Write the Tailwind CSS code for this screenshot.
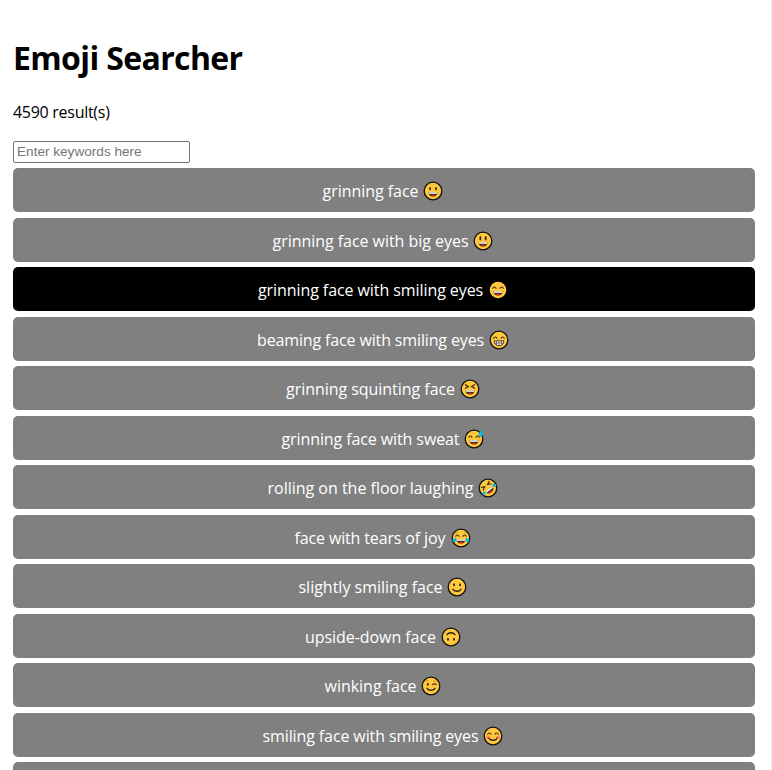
<!DOCTYPE html>
<html lang="en">
<head>
<meta charset="utf-8">
<title>Emoji Searcher</title>
<script src="https://cdn.jsdelivr.net/npm/@tailwindcss/browser@4"></script>
</head>
<body class="h-[770px] overflow-hidden border-r border-[#ececec] bg-white font-['Open_Sans','Noto_Sans',sans-serif] text-base text-black">
<svg class="hidden">
  <defs>
    <g id="disc"><circle cx="10" cy="10" r="8.800" fill="#ffc83d" stroke="#111" stroke-width="1.300"/></g>
    <g id="grin"><path d="M5.500 11.300h9c0 2.700-1.800 4.300-4.500 4.300s-4.500-1.600-4.500-4.300z" fill="#4a2d18"/><path d="M5.900 11.300h8.200v1.500h-8.200z" fill="#fff"/><path d="M7.800 15c.9-1.300 3.500-1.300 4.400 0-1.200.8-3.200.8-4.400 0z" fill="#f03a17"/></g>
    <g id="happy" fill="none" stroke="#3b2a1a" stroke-width="1.100" stroke-linecap="round"><path d="M4.700 8.300c.5-1.700 2.800-1.700 3.300 0M12 8.300c.5-1.700 2.800-1.700 3.300 0"/></g>
    <path id="smile" d="M6 12.300c1.600 2.600 6.400 2.600 8 0" fill="none" stroke="#2b2118" stroke-width="1.300" stroke-linecap="round"/>
  </defs>
</svg>
<main class="pt-9 pl-[13px] pr-4">
  <h1 class="h-11 text-[32px] leading-[44px] font-bold tracking-[-0.63px] whitespace-nowrap">Emoji Searcher</h1>
  <p class="mt-5 h-6 leading-6 tracking-[-0.28px]">4590 result(s)</p>
  <input class="mt-[17px] block h-[22px] w-[177px] rounded-[2px] border border-[#767676] bg-white px-[3px] pb-0.5 font-['Liberation_Sans',Arial,sans-serif] text-[13.6px] leading-4 placeholder:text-[#757575]" type="text" placeholder="Enter keywords here">
  <ul class="mt-[5px] flex flex-col gap-[5.5px] text-white">
    <li class="flex h-11 shrink-0 items-center justify-center gap-[3.5px] rounded-[5px] bg-[#808080] pt-0.5 pr-[2.5px]"><span class="w-[97px] whitespace-nowrap tracking-[-0.04px]">grinning face</span>
      <svg class="size-5" viewBox="0 0 20 20"><use href="#disc"/><ellipse cx="7" cy="7.700" rx=".9" ry="1.600" fill="#2b2118"/><ellipse cx="13" cy="7.700" rx=".9" ry="1.600" fill="#2b2118"/><use href="#grin"/></svg></li>
    <li class="flex h-11 shrink-0 items-center justify-center gap-[3.5px] rounded-[5px] bg-[#808080] pt-0.5 pr-[2.5px]"><span class="w-[197px] whitespace-nowrap tracking-[-0.04px]">grinning face with big eyes</span>
      <svg class="size-5" viewBox="0 0 20 20"><use href="#disc"/><ellipse cx="7.300" cy="7.200" rx=".9" ry="2.300" fill="#2b2118"/><ellipse cx="12.700" cy="7.200" rx=".9" ry="2.300" fill="#2b2118"/><use href="#grin"/></svg></li>
    <li class="flex h-11 shrink-0 items-center justify-center gap-[3.5px] rounded-[5px] bg-black pt-0.5 pr-[2.5px]"><span class="w-[226px] whitespace-nowrap tracking-[-0.08px]">grinning face with smiling eyes</span>
      <svg class="size-5" viewBox="0 0 20 20"><circle cx="10" cy="10" r="8.300" fill="#ffc83d"/><use href="#happy"/><use href="#grin"/></svg></li>
    <li class="flex h-11 shrink-0 items-center justify-center gap-[3.5px] rounded-[5px] bg-[#808080] pt-0.5 pr-[2.5px]"><span class="w-[228px] whitespace-nowrap tracking-[-0.14px]">beaming face with smiling eyes</span>
      <svg class="size-5" viewBox="0 0 20 20"><use href="#disc"/><use href="#happy"/><path d="M5.200 10.800h9.600c0 3-2 5-4.800 5s-4.800-2-4.800-5z" fill="#fff" stroke="#3b2a1a" stroke-width=".9"/><path d="M5.500 13h9M7.500 11v4.200M10 11v4.700M12.500 11v4.200" stroke="#3b2a1a" stroke-width=".6"/></svg></li>
    <li class="flex h-11 shrink-0 items-center justify-center gap-[3.5px] rounded-[5px] bg-[#808080] pt-0.5 pr-[2.5px]"><span class="w-[170px] whitespace-nowrap tracking-[-0.04px]">grinning squinting face</span>
      <svg class="size-5" viewBox="0 0 20 20"><use href="#disc"/><path d="M4.900 5.600l3.500 1.900-3.500 1.900M15.100 5.600l-3.500 1.900 3.500 1.900" fill="none" stroke="#2b2118" stroke-width="1.100"/><use href="#grin"/></svg></li>
    <li class="flex h-11 shrink-0 items-center justify-center gap-[3.5px] rounded-[5px] bg-[#808080] pt-0.5 pr-[2.5px]"><span class="w-[179px] whitespace-nowrap tracking-[-0.1px]">grinning face with sweat</span>
      <svg class="size-5" viewBox="0 0 20 20"><use href="#disc"/><use href="#happy"/><use href="#grin"/><path d="M16.700 1.200c1.300 2 1.900 3.200 1.900 4.400 0 2.800-3.900 2.800-3.900 0 0-1.200.8-2.400 2-4.400z" fill="#00bcf2"/></svg></li>
    <li class="flex h-11 shrink-0 items-center justify-center gap-[3.5px] rounded-[5px] bg-[#808080] pt-0.5 pr-[2.5px]"><span class="w-[207px] whitespace-nowrap tracking-[-0.01px]">rolling on the floor laughing</span>
      <svg class="size-5" viewBox="0 0 20 20"><use href="#disc"/><g transform="rotate(-38 10 10)"><path d="M4.700 5.300l3.500 1.700-3.500 1.700M15.300 5.300l-3.500 1.700 3.500 1.700" fill="none" stroke="#2b2118" stroke-width="1.100"/><use href="#grin"/><path d="M4.700 9.800c-2 .2-3.100 1.200-2.900 2.600.3 1.600 2.800 1.400 3-.3zM15.300 9.800c2 .2 3.100 1.200 2.900 2.600-.3 1.600-2.800 1.400-3-.3z" fill="#00bcf2"/></g></svg></li>
    <li class="flex h-11 shrink-0 items-center justify-center gap-[3.5px] rounded-[5px] bg-[#808080] pt-0.5 pr-[2.5px]"><span class="w-[153px] whitespace-nowrap tracking-[-0.14px]">face with tears of joy</span>
      <svg class="size-5" viewBox="0 0 20 20"><use href="#disc"/><path d="M4.500 5.300l2-1M15.500 5.300l-2-1" stroke="#d67d00" stroke-width=".9"/><use href="#happy"/><use href="#grin"/><path d="M5 10c-2.200 0-3.600 1.200-3.300 2.900.4 1.900 3.200 1.500 3.400-.5zM15 10c2.200 0 3.600 1.200 3.300 2.900-.4 1.900-3.200 1.500-3.400-.5z" fill="#00bcf2"/></svg></li>
    <li class="flex h-11 shrink-0 items-center justify-center gap-[3.5px] rounded-[5px] bg-[#808080] pt-0.5 pr-[2.5px]"><span class="w-[145px] whitespace-nowrap tracking-[-0.01px]">slightly smiling face</span>
      <svg class="size-5" viewBox="0 0 20 20"><use href="#disc"/><ellipse cx="7" cy="7.800" rx=".9" ry="1.500" fill="#2b2118"/><ellipse cx="13" cy="7.800" rx=".9" ry="1.500" fill="#2b2118"/><use href="#smile"/></svg></li>
    <li class="flex h-11 shrink-0 items-center justify-center gap-[3.5px] rounded-[5px] bg-[#808080] pt-0.5 pr-[2.5px]"><span class="w-[132px] whitespace-nowrap tracking-[-0.06px]">upside-down face</span>
      <svg class="size-5" viewBox="0 0 20 20"><use href="#disc"/><g transform="rotate(180 10 10)"><ellipse cx="7" cy="7.800" rx=".9" ry="1.500" fill="#2b2118"/><ellipse cx="13" cy="7.800" rx=".9" ry="1.500" fill="#2b2118"/><use href="#smile"/></g></svg></li>
    <li class="flex h-11 shrink-0 items-center justify-center gap-[3.5px] rounded-[5px] bg-[#808080] pt-0.5 pr-[2.5px]"><span class="w-[93px] whitespace-nowrap tracking-[-0.02px]">winking face</span>
      <svg class="size-5" viewBox="0 0 20 20"><use href="#disc"/><path d="M4.500 5.700c.5-1 1.500-1.400 2.500-1.200M12.500 5.400c1-.6 2-.5 3 .1" stroke="#d67d00" stroke-width=".9" fill="none"/><ellipse cx="6.800" cy="8.300" rx=".9" ry="1.500" fill="#2b2118"/><path d="M11.700 8.600c.7-1.100 2.700-1.100 3.400 0" fill="none" stroke="#2b2118" stroke-width="1.100" stroke-linecap="round"/><use href="#smile"/></svg></li>
    <li class="flex h-11 shrink-0 items-center justify-center gap-[3.5px] rounded-[5px] bg-[#808080] pt-0.5 pr-[2.5px]"><span class="w-[217px] whitespace-nowrap tracking-[-0.11px]">smiling face with smiling eyes</span>
      <svg class="size-5" viewBox="0 0 20 20"><use href="#disc"/><circle cx="5" cy="11.300" r="1.900" fill="#ff8257"/><circle cx="15" cy="11.300" r="1.900" fill="#ff8257"/><use href="#happy"/><use href="#smile"/></svg></li>
    <li class="h-11 shrink-0 rounded-[5px] bg-[#808080]"></li>
  </ul>
</main>
</body>
</html>
